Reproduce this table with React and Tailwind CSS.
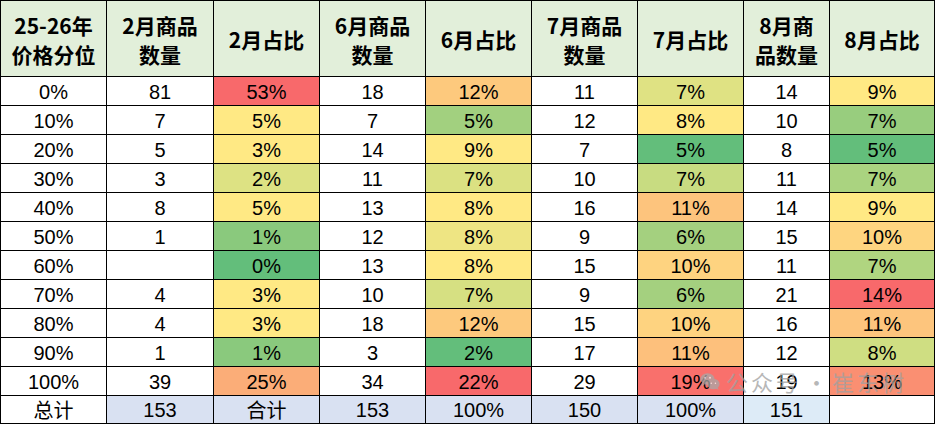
import React from "react"

const headers = [
  ["25-26年", "价格分位"],
  ["2月商品", "数量"],
  ["2月占比"],
  ["6月商品", "数量"],
  ["6月占比"],
  ["7月商品", "数量"],
  ["7月占比"],
  ["8月商", "品数量"],
  ["8月占比"],
]

// [分位, 2月数, 2月比, 6月数, 6月比, 7月数, 7月比, 8月数, 8月比] with cell colours
const rows = [
  ["0%", "81", ["53%", "#f8696b"], "18", ["12%", "#fdc97d"], "11", ["7%", "#dfe283"], "14", ["9%", "#ffe984"]],
  ["10%", "7", ["5%", "#ffe984"], "7", ["5%", "#a2d07f"], "12", ["8%", "#ffe984"], "10", ["7%", "#98cd7e"]],
  ["20%", "5", ["3%", "#ffe984"], "14", ["9%", "#ffe984"], "7", ["5%", "#63be7b"], "8", ["5%", "#63be7b"]],
  ["30%", "3", ["2%", "#dde283"], "11", ["7%", "#dbe182"], "10", ["7%", "#c8dc81"], "11", ["7%", "#aad380"]],
  ["40%", "8", ["5%", "#ffe984"], "13", ["8%", "#ffe984"], "16", ["11%", "#fdc47d"], "14", ["9%", "#ffe984"]],
  ["50%", "1", ["1%", "#8ac97d"], "12", ["8%", "#eee583"], "9", ["6%", "#a4d07f"], "15", ["10%", "#fed580"]],
  ["60%", "", ["0%", "#63be7b"], "13", ["8%", "#ffe984"], "15", ["10%", "#fed380"], "11", ["7%", "#b0d580"]],
  ["70%", "4", ["3%", "#ffe984"], "10", ["7%", "#d6e082"], "9", ["6%", "#a4d07f"], "21", ["14%", "#f8696b"]],
  ["80%", "4", ["3%", "#ffe984"], "18", ["12%", "#fdc97d"], "15", ["10%", "#fed380"], "16", ["11%", "#fdc57d"]],
  ["90%", "1", ["1%", "#8ac97d"], "3", ["2%", "#63be7b"], "17", ["11%", "#fdc07c"], "12", ["8%", "#cfde82"]],
  ["100%", "39", ["25%", "#fbad78"], "34", ["22%", "#f8696b"], "29", ["19%", "#f9706c"], "19", ["13%", "#fa8f72"]],
]

const totals = [
  ["总计", "#ffffff"],
  ["153", "#d9e1f2"],
  ["合计", "#d9e1f2"],
  ["153", "#d9e1f2"],
  ["100%", "#d9e1f2"],
  ["150", "#d9e1f2"],
  ["100%", "#d9e1f2"],
  ["151", "#ddebf7"],
  ["", "#ffffff"],
]

const widths = ["w-[106px]", "w-[107px]", "w-[106px]", "w-[106px]", "w-[106px]", "w-[106px]", "w-[106px]", "w-[86px]", "w-[105px]"]

export default function App() {
  return (
    <div className="relative w-[936px] h-[424px] bg-white overflow-hidden">
      <table className="border-collapse table-fixed text-black font-['Liberation_Sans','Noto_Sans_CJK_SC',sans-serif]">
        <thead>
          <tr className="h-[76px] bg-[#e2efda]">
            {headers.map((h, i) => (
              <th key={i} className={`${widths[i]} border border-black p-0 pt-[2px] text-center font-['Noto_Sans_CJK_SC',sans-serif] font-bold text-[21px] leading-[29px] whitespace-nowrap`}>
                {h.map((line, j) => (
                  <div key={j}>{line}</div>
                ))}
              </th>
            ))}
          </tr>
        </thead>
        <tbody>
          {rows.map((r, i) => (
            <tr key={i} className="h-[28.8px]">
              {r.map((c, j) => {
                const isColor = Array.isArray(c)
                return (
                  <td
                    key={j}
                    className="border border-black p-0 pt-[2px] text-center text-[20px] leading-[26px]"
                    style={isColor ? { backgroundColor: c[1] } : undefined}
                  >
                    {isColor ? c[0] : c}
                  </td>
                )
              })}
            </tr>
          ))}
          <tr className="h-[28px]">
            {totals.map((t, j) => (
              <td
                key={j}
                className={`border border-black p-0 text-center text-[20px] leading-[26px] ${j === 0 || j === 2 ? "font-['Noto_Sans_CJK_SC',sans-serif]" : ""}`}
                style={{ backgroundColor: t[1] }}
              >
                {t[0]}
              </td>
            ))}
          </tr>
        </tbody>
      </table>

      {/* 水印 */}
      <div className="absolute left-[700px] top-[370px] flex items-center gap-[6px] whitespace-nowrap text-[#a0a0a0] opacity-75 pointer-events-none font-['Noto_Sans_CJK_SC',sans-serif] text-[22px] leading-none">
        <svg width="20" height="19" viewBox="0 0 24 22" fill="#a8a8a8">
          <ellipse cx="9" cy="8" rx="8.5" ry="7" />
          <ellipse cx="16" cy="14" rx="7.5" ry="6.2" />
          <path d="M3 13 L2 17 L6 14 Z" />
          <path d="M21 18 L22.5 21 L18.5 19.5 Z" />
          <circle cx="6" cy="6.5" r="1.1" fill="#ffffff" />
          <circle cx="12" cy="6.5" r="1.1" fill="#ffffff" />
          <circle cx="13.5" cy="13" r="0.9" fill="#ffffff" />
          <circle cx="18.5" cy="13" r="0.9" fill="#ffffff" />
        </svg>
        <div className="flex items-center">
          <span className="tracking-[3px]">公众号</span>
          <span className="w-[31px] text-center">·</span>
          <span className="tracking-[3px]">崔东树</span>
        </div>
      </div>
    </div>
  )
}
